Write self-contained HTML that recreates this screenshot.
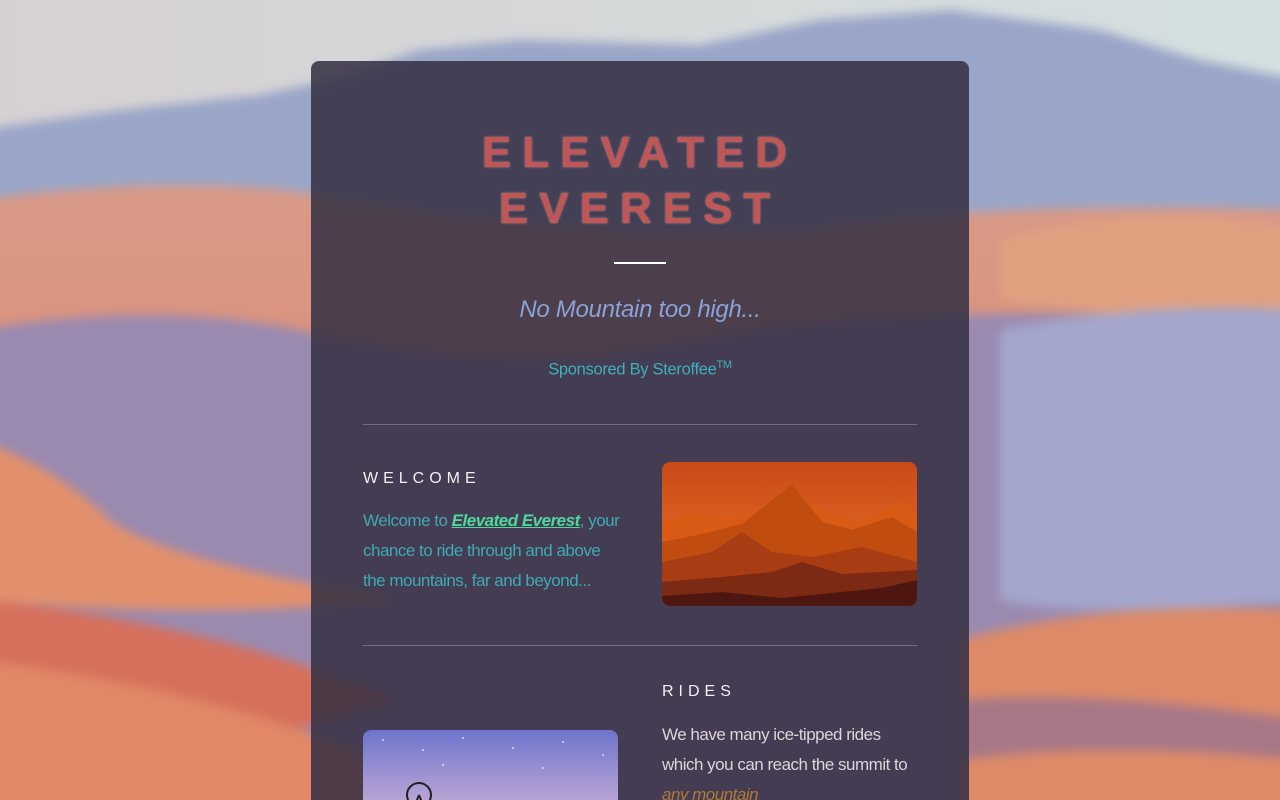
<!DOCTYPE html>
<html><head><meta charset="utf-8"><style>
html,body{margin:0;padding:0;width:1280px;height:800px;overflow:hidden;font-family:"Liberation Sans",sans-serif;position:relative}
#bg{position:absolute;left:-20px;top:-20px;filter:blur(5px)}
.card{position:absolute;left:311px;top:61px;width:658px;height:739px;overflow:hidden;background:rgba(52,48,66,0.86);border-radius:8px 8px 0 0}
.t{position:absolute;left:0;width:658px;text-align:center}
h1{margin:0;font-size:44px;font-weight:bold;letter-spacing:11px;color:#c05656;line-height:56px;text-shadow:0 0 2px rgba(230,170,170,.7)}
.bar{position:absolute;left:303px;top:201px;width:52px;height:2px;background:#fff}
.tag{top:235px;font-size:24px;font-style:italic;color:#8aa2d6;letter-spacing:-0.3px}
.sp{top:298px;font-size:16.5px;color:#3fb0b8;letter-spacing:-0.3px}
.sp sup{font-size:11px}
.hr{position:absolute;left:52px;width:554px;height:1px;background:rgba(200,200,210,.35)}
.h{position:absolute;font-size:16px;letter-spacing:5px;color:#f0f0f4}
.p{position:absolute;font-size:17px;line-height:30px;letter-spacing:-0.5px}
</style></head><body>
<svg id="bg" width="1320" height="840" viewBox="-20 -20 1320 840">
<defs><linearGradient id="sky" x1="0" y1="0" x2="1" y2="0"><stop offset="0" stop-color="#d6d0d2"/><stop offset="1" stop-color="#d4e0e0"/></linearGradient>
<linearGradient id="og" x1="0" y1="0" x2="0" y2="1"><stop offset="0" stop-color="#d89a88"/><stop offset="1" stop-color="#e07a60"/></linearGradient></defs>
<rect x="-20" y="-20" width="1320" height="840" fill="url(#sky)"/>
<path d="M-20 130 L120 110 L260 95 L330 80 L420 50 L520 40 L700 45 L820 20 L950 10 L1100 30 L1200 60 L1300 80 L1300 820 L-20 820Z" fill="#9aa6c8"/>
<path d="M-20 200 Q200 170 350 200 Q600 240 800 230 Q1000 200 1300 210 L1300 820 L-20 820Z" fill="url(#og)"/>
<path d="M1000 240 Q1150 200 1300 230 L1300 330 Q1150 320 1000 300Z" fill="#e0a080"/>
<path d="M-20 330 Q150 300 300 330 Q500 380 700 340 Q900 300 1300 320 L1300 820 L-20 820Z" fill="#9a8ab0"/>
<path d="M1000 330 Q1150 300 1300 310 L1300 600 Q1100 620 1000 600Z" fill="#a4a6cc"/>
<path d="M-20 440 Q60 470 110 520 Q160 560 400 600 Q200 620 -20 600Z" fill="#e2906c"/>
<path d="M-20 600 Q200 620 400 700 L-20 820Z" fill="#d6705c"/>
<path d="M-20 660 Q300 700 500 820 L-20 820Z" fill="#e08868"/>
<path d="M960 640 Q1100 600 1300 610 L1300 820 L960 820Z" fill="#dd8a68"/>
<path d="M960 700 Q1100 690 1300 720 L1300 760 Q1100 740 960 760Z" fill="#a87888"/>
</svg>
<div class="card">
<div class="t" style="top:64px"><h1>ELEVATED<br>EVEREST</h1></div>
<div class="bar"></div>
<div class="t tag">No Mountain too high...</div>
<div class="t sp">Sponsored By Steroffee<sup>TM</sup></div>
<div class="hr" style="top:363px"></div>
<div class="h" style="left:52px;top:409px">WELCOME</div>
<div class="p" style="left:52px;top:445px;width:258px;color:#3eaab2">Welcome to <b style="font-style:italic;color:#4fd89c;text-decoration:underline">Elevated Everest</b>, your chance to ride through and above<br>the mountains, far and beyond...</div>
<svg style="position:absolute;left:351px;top:401px;border-radius:8px" width="255" height="144" viewBox="0 0 255 144">
<defs><linearGradient id="s1" x1="0" y1="0" x2="0" y2="1"><stop offset="0" stop-color="#c84a18"/><stop offset="1" stop-color="#f07a2a"/></linearGradient></defs>
<rect width="255" height="144" fill="url(#s1)"/>
<path d="M0 60 L30 50 L60 58 L100 45 L125 25 L150 45 L200 60 L240 40 L255 50 L255 144 L0 144Z" fill="#d85a14"/>
<path d="M0 80 L40 72 L80 62 L130 22 L160 60 L190 68 L230 55 L255 70 L255 144 L0 144Z" fill="#c04c10"/>
<path d="M0 100 L50 90 L80 70 L110 90 L150 95 L200 85 L255 100 L255 144 L0 144Z" fill="#a83c12"/>
<path d="M0 120 L60 115 L110 110 L140 100 L180 112 L255 108 L255 144 L0 144Z" fill="#7c2a14"/>
<path d="M0 134 L60 130 L120 136 L180 130 L220 126 L255 118 L255 144 L0 144Z" fill="#4e1610"/>
</svg>
<div class="hr" style="top:584px"></div>
<div class="h" style="left:351px;top:622px">RIDES</div>
<div class="p" style="left:351px;top:659px;width:260px;color:#ddd4d8">We have many ice-tipped rides<br>which you can reach the summit to<br><i style="color:#b07a38">any mountain</i></div>
<svg style="position:absolute;left:52px;top:669px;border-radius:8px 8px 0 0" width="255" height="100" viewBox="0 0 255 100">
<defs><linearGradient id="s2" x1="0" y1="0" x2="0" y2="1"><stop offset="0" stop-color="#6e74cc"/><stop offset="1" stop-color="#d8b8d8"/></linearGradient></defs>
<rect width="255" height="100" fill="url(#s2)"/>
<g fill="#fff" opacity=".7"><circle cx="20" cy="10" r="1"/><circle cx="60" cy="20" r="1"/><circle cx="100" cy="8" r="1"/><circle cx="150" cy="18" r="1"/><circle cx="200" cy="12" r="1"/><circle cx="240" cy="25" r="1"/><circle cx="80" cy="35" r="1"/><circle cx="180" cy="38" r="1"/></g>
<circle cx="56" cy="65" r="12" fill="none" stroke="#222" stroke-width="2"/>
<path d="M56 65 L48 85 M56 65 L64 85" stroke="#222" stroke-width="2"/>
<path d="M0 80 Q60 60 130 80 L0 100Z" fill="#eee0ea"/>
</svg>
</div>
</body></html>
